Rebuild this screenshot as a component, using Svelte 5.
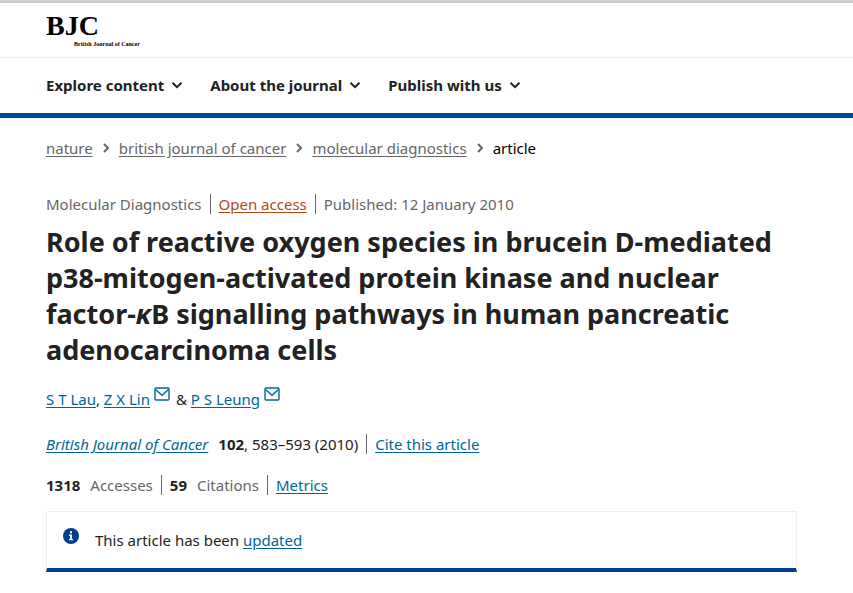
<script lang="ts">
  const menus = ['Explore content', 'About the journal', 'Publish with us'];
  const crumbs = ['nature', 'british journal of cancer', 'molecular diagnostics'];
</script>

{#snippet chevron()}
  <svg class="chevron" viewBox="0 0 12 8" aria-hidden="true"><path d="M1.5 1.7 6 6.2l4.5-4.5" /></svg>
{/snippet}

{#snippet envelope()}
  <svg class="envelope" viewBox="0 0 16 14" aria-hidden="true">
    <rect x="1" y="1" width="14" height="12" rx="1" />
    <path d="M1.5 2.5 8 8.2l6.5-5.7" />
  </svg>
{/snippet}

<div class="page">
  <header>
    <div class="brand">
      <a class="logo" href="#home" aria-label="British Journal of Cancer">
        <span class="initials">BJC</span>
        <span class="name">British Journal of Cancer</span>
      </a>
    </div>
    <nav class="menu">
      {#each menus as menu}
        <button type="button">{menu}{@render chevron()}</button>
      {/each}
    </nav>
  </header>

  <main>
    <nav aria-label="breadcrumbs">
      <ol class="crumbs">
        {#each crumbs as crumb}
          <li>
            <a href="#crumb">{crumb}</a>
            <svg class="arrow" viewBox="0 0 8 10" aria-hidden="true"><path d="m2 1 4 4-4 4" /></svg>
          </li>
        {/each}
        <li class="current">article</li>
      </ol>
    </nav>

    <ul class="list meta">
      <li>Molecular Diagnostics</li>
      <li><a class="open" href="#open-access">Open access</a></li>
      <li>Published: <time datetime="2010-01-12">12 January 2010</time></li>
    </ul>

    <h1>Role of reactive oxygen species in brucein D-mediated p38-mitogen-activated protein kinase and nuclear factor-<i>κ</i>B signalling pathways in human pancreatic adenocarcinoma cells</h1>

    <p class="authors">
      <a href="#lau">S T Lau</a>, <a href="#lin">Z X Lin{@render envelope()}</a> &amp; <a href="#leung">P S Leung{@render envelope()}</a>
    </p>

    <ul class="list source">
      <li><a class="journal" href="#journal"><i>British Journal of Cancer</i></a><b>102</b>, 583–593 (2010)</li>
      <li><a href="#cite">Cite this article</a></li>
    </ul>

    <ul class="list metrics">
      <li><b>1318</b>Accesses</li>
      <li><b>59</b>Citations</li>
      <li><a href="#metrics">Metrics</a></li>
    </ul>

    <div class="notice">
      <svg class="info" viewBox="0 0 16 16" aria-hidden="true">
        <circle cx="8" cy="8" r="8" />
        <path d="M7 3.2h2v2H7zM6 6.5h3v4.5h1v1.2H6V11h1V7.7H6z" />
      </svg>
      <p>This article has been <a href="#updated">updated</a></p>
    </div>
  </main>
</div>

<style>
  :global(body) {
    margin: 0;
    background: #fff;
  }

  .page {
    border-top: 3px solid #ccc;
    font-family: 'Segoe UI', 'Noto Sans', sans-serif;
    font-size: 15px;
    line-height: 24px;
    color: #222;
  }

  a {
    color: #069;
    text-underline-offset: 2px;
  }

  ul,
  ol,
  p,
  h1 {
    margin: 0;
    padding: 0;
    list-style: none;
  }

  header {
    border-bottom: 5px solid #004b9b;
  }

  .brand {
    padding: 8px 46px;
    border-bottom: 1px solid #eee;
  }

  .logo {
    display: flex;
    flex-direction: column;
    align-items: flex-start;
    height: 38px;
    color: #000;
    font-family: 'Liberation Serif', serif;
    font-weight: bold;
    text-decoration: none;
  }

  .initials {
    font-size: 28px;
    line-height: 30px;
  }

  .name {
    margin-left: 28px;
    font-size: 6px;
    line-height: 6px;
  }

  .menu {
    display: flex;
    flex-wrap: wrap;
    gap: 27px;
    padding: 15px 46px 16px;
  }

  .menu button {
    display: flex;
    align-items: center;
    gap: 7px;
    padding: 0;
    border: none;
    background: none;
    color: #222;
    font: inherit;
    font-weight: 700;
    cursor: pointer;
  }

  .chevron {
    width: 12px;
    height: 8px;
    fill: none;
    stroke: #222;
    stroke-width: 2;
  }

  main {
    padding: 18px 56px 20px 46px;
  }

  .crumbs {
    display: flex;
    flex-wrap: wrap;
    color: #000;
  }

  .crumbs li {
    display: flex;
    align-items: center;
  }

  .crumbs a {
    color: #666;
  }

  .arrow {
    width: 8px;
    height: 10px;
    margin: 0 9px;
    fill: none;
    stroke: #666;
    stroke-width: 2;
  }

  .list {
    display: flex;
    flex-wrap: wrap;
    align-items: center;
  }

  .list li {
    line-height: 20px;
  }

  .list li + li {
    margin-left: 8px;
    padding-left: 8px;
    border-left: 1px solid #666;
  }

  .meta {
    margin-top: 34px;
    color: #666;
  }

  .meta .open {
    color: #b74616;
  }

  h1 {
    margin-top: 10px;
    font-size: 27px;
    line-height: 36px;
    font-weight: 700;
  }

  .authors {
    margin-top: 19px;
  }

  .envelope {
    width: 16px;
    height: 14px;
    margin: 0 2px 0 4px;
    vertical-align: 4px;
    fill: none;
    stroke: #069;
    stroke-width: 1.4;
  }

  .source {
    margin-top: 23px;
  }

  .journal {
    margin-right: 10px;
  }

  .metrics {
    margin-top: 21px;
  }

  .metrics li {
    color: #666;
  }

  .metrics b {
    margin-right: 10px;
    color: #222;
  }

  .notice {
    display: flex;
    align-items: flex-start;
    gap: 16px;
    margin-top: 16px;
    padding: 16px;
    border: 1px solid #eee;
    border-bottom: 4px solid #003f8d;
  }

  .info {
    width: 16px;
    height: 16px;
    fill: #003f8d;
  }

  .info path {
    fill: #fff;
  }
</style>
